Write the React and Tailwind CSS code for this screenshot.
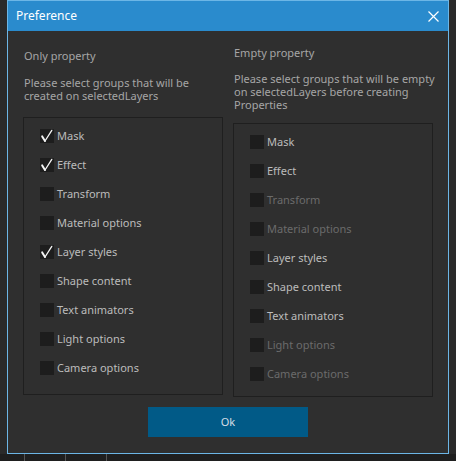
import React from "react";

const leftItems = [
  { label: "Mask", checked: true },
  { label: "Effect", checked: true },
  { label: "Transform" },
  { label: "Material options" },
  { label: "Layer styles", checked: true },
  { label: "Shape content" },
  { label: "Text animators" },
  { label: "Light options" },
  { label: "Camera options" },
];

const rightItems = [
  { label: "Mask" },
  { label: "Effect" },
  { label: "Transform", disabled: true },
  { label: "Material options", disabled: true },
  { label: "Layer styles" },
  { label: "Shape content" },
  { label: "Text animators" },
  { label: "Light options", disabled: true },
  { label: "Camera options", disabled: true },
];

function CheckRow({ label, checked, disabled }) {
  return (
    <div className="flex items-center h-[14px] gap-[3px]">
      <div className="w-[14px] h-[14px] bg-[#1d1d1d]">
        {checked && (
          <svg width="14" height="14" viewBox="0 0 14 14">
            <path d="M2.2 7.4 L5 12" fill="none" stroke="#f4f4f4" strokeWidth="2" strokeLinecap="round" />
            <path d="M5 12 L11.8 1.4" fill="none" stroke="#f4f4f4" strokeWidth="1.3" strokeLinecap="round" />
          </svg>
        )}
      </div>
      <span
        className={`text-[11px] leading-[14px] whitespace-nowrap ${
          disabled ? "text-[#6b6b6b]" : "text-[#bcbcbc]"
        }`}
      >
        {label}
      </span>
    </div>
  );
}

export default function App() {
  return (
    <div
      className="w-[456px] h-[461px] bg-[#262626] overflow-hidden flex flex-col"
      style={{ fontFamily: '"Noto Sans", "Open Sans", sans-serif' }}
    >
      <div className="flex">
        <div className="w-[7px] h-[454px] bg-[#2a2a2a]" />
        <div className="w-[442px] h-[454px] border border-[#6cb6e6] bg-[#2f2f2f] flex flex-col">
          <div className="h-[30px] bg-[#2a8bcd] flex items-center justify-between pl-[8px] pr-[9px]">
            <span className="text-[12px] text-white leading-none">Preference</span>
            <svg width="11" height="11" viewBox="0 0 11 11">
              <path d="M0.5 0.5 L10.5 10.5 M10.5 0.5 L0.5 10.5" stroke="#ffffff" strokeWidth="1.2" />
            </svg>
          </div>

          <div className="flex gap-[10px] px-[15px] items-start">
            <div className="w-[200px] pt-[18px]">
              <div className="pl-px text-[11px] leading-[13px] text-[#a6a6a6] whitespace-nowrap">Only property</div>
              <div className="pl-px mt-[14px] text-[11px] leading-[13px] text-[#a6a6a6] whitespace-nowrap">
                Please select groups that will be
                <br />
                created on selectedLayers
              </div>
              <div className="mt-[15px] border border-[#1f1f1f] pl-[16px] pt-[11px] pb-[19px] flex flex-col gap-[15px]">
                {leftItems.map((it) => (
                  <CheckRow key={it.label} {...it} />
                ))}
              </div>
            </div>

            <div className="w-[200px] pt-[15px]">
              <div className="pl-px text-[11px] leading-[13px] text-[#a6a6a6] whitespace-nowrap">Empty property</div>
              <div className="pl-px mt-[13px] text-[11px] leading-[13px] text-[#a6a6a6] whitespace-nowrap">
                Please select groups that will be empty
                <br />
                on selectedLayers before creating
                <br />
                Properties
              </div>
              <div className="mt-[12px] border border-[#1f1f1f] pl-[16px] pt-[11px] pb-[15px] flex flex-col gap-[15px]">
                {rightItems.map((it) => (
                  <CheckRow key={it.label} {...it} />
                ))}
              </div>
            </div>
          </div>

          <div className="flex justify-center mt-[10px]">
            <button className="w-[160px] h-[30px] bg-[#015a87] text-[11px] text-[#d4dde6]">
              Ok
            </button>
          </div>
        </div>
        <div className="w-[7px] h-[454px] bg-[#2a2a2a]" />
      </div>
      <div className="flex-1 bg-[#1f1f1f] flex items-start gap-[40px] pl-[24px]">
        <div className="w-px h-[7px] bg-[#555]" />
        <div className="w-px h-[7px] bg-[#555]" />
        <div className="w-px h-[7px] bg-[#555]" />
      </div>
    </div>
  );
}
